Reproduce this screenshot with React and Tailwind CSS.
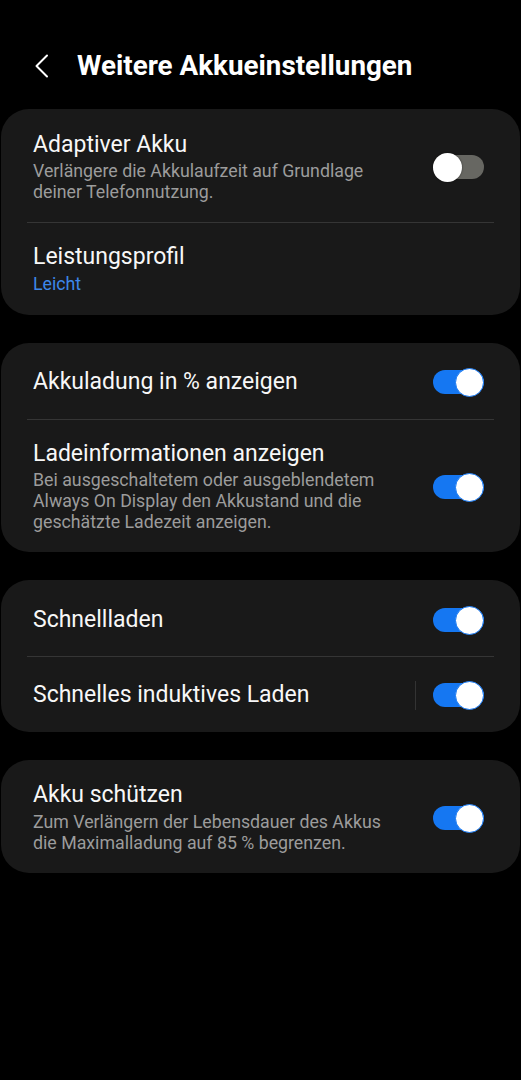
import React from "react";

function Toggle({ on }) {
  return (
    <div className="relative w-[51px] h-[30px] shrink-0">
      <div
        className={
          "absolute left-0 right-0 top-[3px] h-[24px] rounded-full " +
          (on ? "bg-[#1577f2]" : "bg-[#676762]")
        }
      />
      <div
        className={
          "absolute top-px w-[29px] h-[29px] rounded-full bg-white " +
          (on ? "right-0 border-[1.5px] border-[#1577f2]" : "left-0 shadow-[0_0_2px_rgba(0,0,0,0.6)]")
        }
      />
    </div>
  );
}

function Row({ title, sub, subBlue, on, py, vline, subMt = "mt-[2px]" }) {
  return (
    <div className={"flex items-center pl-[32px] pr-[36px] " + py}>
      <div className="flex-1 min-w-0">
        <div className="text-[23px] leading-[28px] text-[#f7f7f7]">{title}</div>
        {sub && (
          <div
            className={
              "text-[17.75px] leading-[21px] " +
              subMt +
              " " +
              (subBlue ? "text-[#3d87ea]" : "text-[#9c9c9c]")
            }
          >
            {sub}
          </div>
        )}
      </div>
      {vline && <div className="w-px h-[29px] bg-[#333333] mr-[17px]" />}
      {on !== undefined && <Toggle on={on} />}
    </div>
  );
}

function Divider() {
  return <div className="mx-[26px] h-px bg-[#353535]" />;
}

function Card({ children }) {
  return <div className="mx-px rounded-[28px] bg-[#191919]">{children}</div>;
}

export default function App() {
  return (
    <div
      className="min-h-[1080px] bg-black"
      style={{ fontFamily: "Roboto, 'Noto Sans', sans-serif" }}
    >
      <div className="flex items-center pt-[50px] pb-[27px] h-[109px]">
        <svg
          width="16"
          height="24"
          viewBox="0 0 16 24"
          className="ml-[34px]"
          fill="none"
          stroke="#ffffff"
          strokeWidth="2"
          strokeLinecap="round"
          strokeLinejoin="round"
        >
          <path d="M13 1.5 L2.5 12 L13 22.5" />
        </svg>
        <div className="ml-[27px] text-[27.8px] leading-[32px] font-bold text-white">
          Weitere Akkueinstellungen
        </div>
      </div>

      <div className="flex flex-col gap-[28px]">
        <Card>
          <Row
            title="Adaptiver Akku"
            sub={
              <>
                Verlängere die Akkulaufzeit auf Grundlage
                <br />
                deiner Telefonnutzung.
              </>
            }
            on={false}
            py="pt-[22px] pb-[19px]"
          />
          <Divider />
          <Row
            title="Leistungsprofil"
            sub="Leicht"
            subBlue
            subMt="mt-[3px]"
            py="pt-[20px] pb-[20px]"
          />
        </Card>

        <Card>
          <Row title="Akkuladung in % anzeigen" on={true} py="pt-[24px] pb-[22px]" />
          <Divider />
          <Row
            title="Ladeinformationen anzeigen"
            sub={
              <>
                Bei ausgeschaltetem oder ausgeblendetem
                <br />
                Always On Display den Akkustand und die
                <br />
                geschätzte Ladezeit anzeigen.
              </>
            }
            on={true}
            py="pt-[20px] pb-[19px]"
          />
        </Card>

        <Card>
          <Row title="Schnellladen" on={true} py="pt-[25px] pb-[21px]" />
          <Divider />
          <Row title="Schnelles induktives Laden" on={true} vline py="pt-[23px] pb-[22px]" />
        </Card>

        <Card>
          <Row
            title="Akku schützen"
            sub={
              <>
                Zum Verlängern der Lebensdauer des Akkus
                <br />
                die Maximalladung auf 85 % begrenzen.
              </>
            }
            subMt="mt-[3px]"
            on={true}
            py="pt-[21px] pb-[19px]"
          />
        </Card>
      </div>
    </div>
  );
}
